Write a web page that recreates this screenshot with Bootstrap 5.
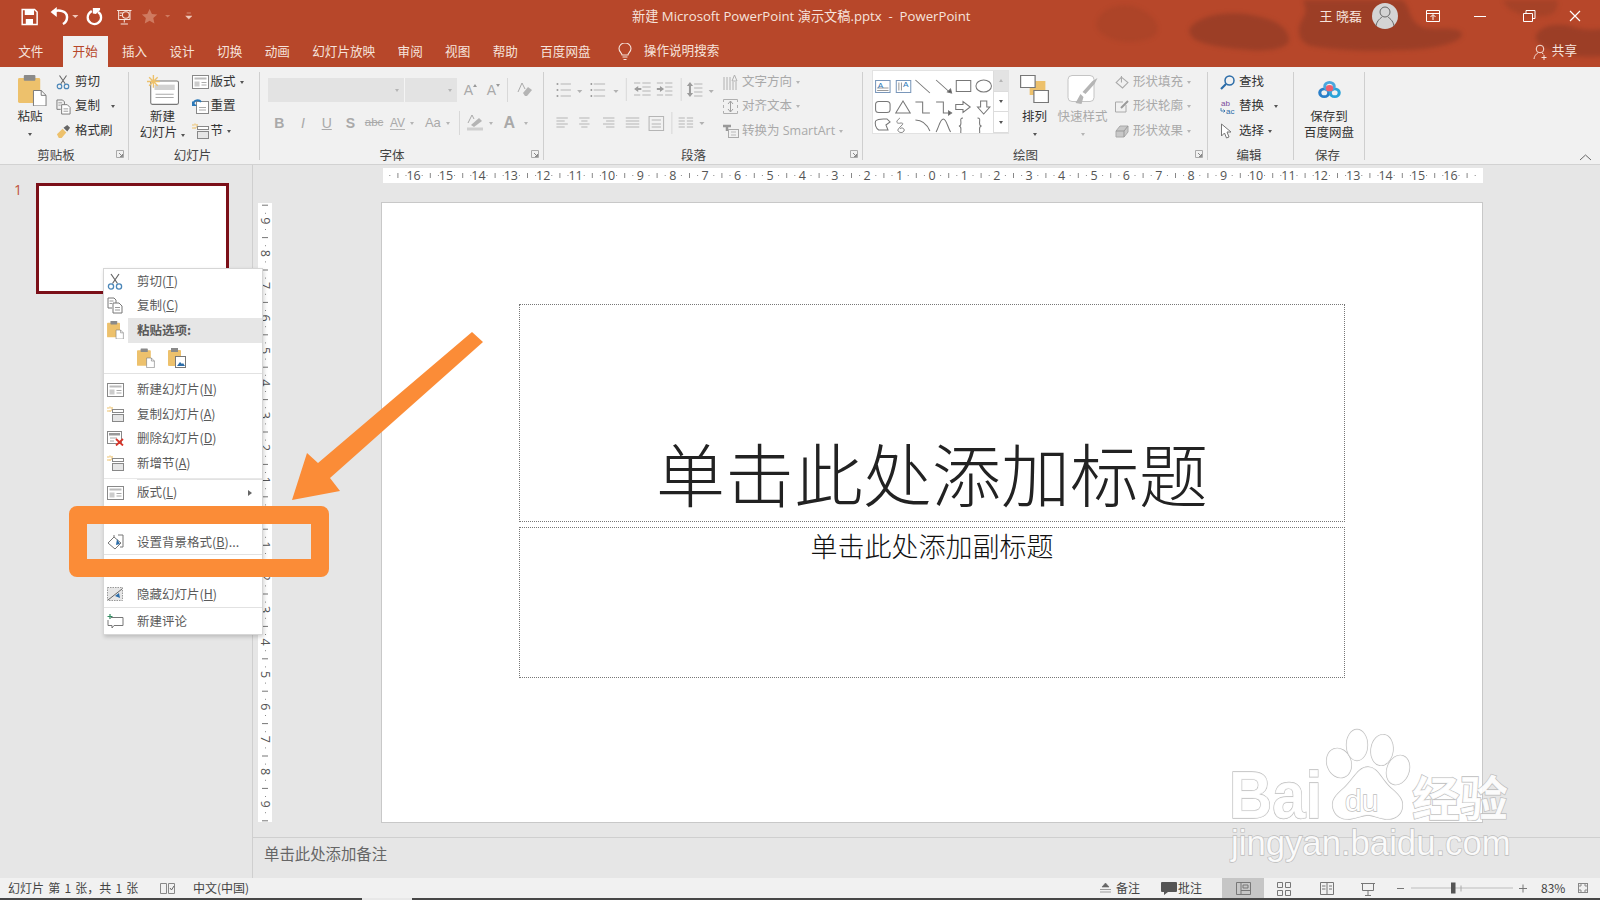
<!DOCTYPE html>
<html lang="zh-CN">
<head>
<meta charset="UTF-8" />
<title>PowerPoint</title>
<link href="https://cdn.jsdelivr.net/npm/bootstrap@5.3.2/dist/css/bootstrap.min.css" rel="stylesheet" />
<script src="https://cdn.jsdelivr.net/npm/bootstrap@5.3.2/dist/js/bootstrap.bundle.min.js" defer></script>
<style>
  html, body { height: 100%; overflow: hidden; }
  body { width: 1600px; height: 900px; position: relative; background: #e6e6e6; font-family: "Open Sans", "Noto Sans CJK SC", sans-serif; font-size: 12.5px; color: #444; }
  svg { display: block; flex: none; }

  /* title bar + tabs */
  .app-head { height: 67px; background: #b7472a; color: #f6e3dc; position: relative; overflow: hidden; }
  .head-tex { position: absolute; left: 1080px; top: 0; filter: blur(2px); }
  .title-row { height: 34px; position: relative; }
  .qat-box { width: 632px; }
  .doc-title { font-size: 13.2px; white-space: nowrap; }
  .user-name { font-size: 13px; margin-right: 10px; }
  .tab-row { height: 33px; position: relative; padding-top: 2px; padding-left: 7px; font-size: 12.6px; }
  .rtab { padding: 0 11.200px; line-height: 31px; color: #f6e3dc; white-space: nowrap; }
  .rtab.on { background: #f1f1f1; color: #b7472a; padding: 0 10px; margin-left: 8px; margin-right: 3px; }
  .tell-me { margin-left: 16px; gap: 12px; }
  .share-box { margin-left: auto; margin-right: 23px; gap: 4px; }

  /* ribbon */
  .ribbon { height: 98px; background: #f1f1f1; border-bottom: 1px solid #d2d2d2; position: relative; }
  .rgroup { height: 97px; position: relative; flex: none; }
  .rgroup::after { content: ""; position: absolute; right: 0; top: 5px; bottom: 4px; width: 1px; background: #cfcfcf; }
  .g1 { width: 129px; } .g2 { width: 131px; } .g3 { width: 284px; } .g4 { width: 319px; }
  .g5 { width: 345px; } .g6 { width: 86px; } .g7 { width: 71px; }
  .rbody { height: 81px; padding-top: 3px; }
  .rlabel { text-align: center; line-height: 16px; color: #444; padding-right: 4px; }
  .g1 .rlabel { padding-right: 17px; }
  .g3 .rlabel, .g4 .rlabel, .g5 .rlabel { padding-right: 20px; }
  .launch { position: absolute; right: 5px; bottom: 6px; }
  .rbig { display: flex; flex-direction: column; align-items: center; line-height: 16px; flex: none; color: #333; }
  .rbig .ico { height: 39px; display: flex; align-items: flex-start; justify-content: center; padding-top: 5px; }
  .rrow { height: 24.500px; display: flex; align-items: center; white-space: nowrap; color: #333; }
  .rrow .ico { width: 19px; flex: none; }
  .dis .rrow, .rbig.dis { color: #a9a9a9; }
  .dd { display: inline-block; width: 0; height: 0; border-left: 2.500px solid transparent; border-right: 2.500px solid transparent; border-top: 3px solid #555; margin-left: 4px; flex: none; }
  .dis .dd, .dd.off { border-top-color: #b5b5b5; }
  .dd.point-up { transform: rotate(180deg); }
  .dd-over { box-shadow: 0 -3px 0 -1.500px #555; }
  .pastebtn { width: 50px; margin-left: 5px; }
  .pastebtn .ico { padding-left: 5px; }
  .smallcol { margin-left: 1px; }
  .newbtn { width: 58px; margin-left: 4.500px; }
  .arrbtn { width: 40px; margin-left: 5.500px; }
  .qsbtn { width: 50px; margin-left: 3px; }
  .savebtn { width: 70px; }
  .savebtn .ico { padding-top: 10px; }
  .fontbox { padding-left: 8px; padding-top: 11px; }
  .fline { height: 24px; display: flex; align-items: center; }
  .fline + .fline { margin-top: 9px; margin-left: -.5px; }
  .combo { height: 24px; background: #e3e3e3; display: flex; align-items: center; justify-content: flex-end; padding-right: 5px; }
  .combo-a { width: 137px; border-right: 1px solid #f4f4f4; }
  .combo-b { width: 52px; }
  .ft { display: flex; align-items: center; justify-content: center; color: #a9a9a9; height: 24px; flex: none; font-family: "Liberation Sans", "Noto Sans CJK SC", sans-serif; }
  .ft-cell { width: 23px; font-size: 14px; position: relative; }
  .ft-cell .grow-tri { position: absolute; right: 3px; top: 6px; width: 0; height: 0; border-left: 2px solid transparent; border-right: 2px solid transparent; border-bottom: 3px solid #999; }
  .ft-cell .grow-tri.down { transform: rotate(180deg); }
  .ft-tool { width: 23.700px; font-size: 14px; }
  .ft-abc { font-size: 11.500px; text-decoration: line-through; }
  .ft-av { width: 39px; justify-content: flex-start; padding-left: 4px; font-size: 12px; }
  .av-txt { border-bottom: 1px solid #b5b5b5; line-height: 12px; }
  .ft-av .dd { margin-left: 5px; }
  .ft-aa { width: 34px; justify-content: flex-start; font-size: 13px; }
  .ft-aa .dd { margin-left: 5.500px; }
  .ft-big { font-size: 16px; font-weight: 700; margin-left: 10px; }
  .vsep { width: 1px; height: 24px; background: #d8d8d8; flex: none; }
  .sep-a { margin: 0 9px 0 4px; }
  .sep-b { margin-right: 7px; }
  .hl-dd { margin-left: 6.500px; }
  .a-dd { margin-left: 9px; }
  .para-col { margin-left: 3px; }
  .para-col .ico { width: 19px; }
  .gallery { margin-left: 9px; height: 64px; width: 137px; background: #fff; border: 1px solid #e2e2e2; }
  .gal-scroll { width: 15px; }
  .gal-cell { flex: 1; display: flex; align-items: center; justify-content: center; border-left: 1px solid #dcdcdc; border-bottom: 1px solid #dcdcdc; }
  .gal-cell.off { background: #e3e3e3; }
  .shape-col { margin-left: 7.500px; }
  .shape-col .ico { width: 18px; }
  .edit-col { padding-left: 12px; }
  .rep-dd { margin-left: 10px; }
  .copy-dd { margin-left: 11px; }
  .collapse-ico { position: absolute; right: 8px; bottom: 3px; }

  /* work area */
  .work { height: 713px; }
  .thumbs { width: 253px; flex: none; border-right: 1px solid #cfcfcf; padding: 18px 0 0 14px; color: #c0533a; font-size: 14px; }
  .thumb-no { width: 22px; line-height: 14px; }
  .thumb { width: 193px; height: 111px; background: #fff; border: 3px solid #7b0f18; }
  .editor { min-width: 0; }
  .h-ruler-row { height: 38px; padding: 3px 0 0 130px; }
  .canvas-row { height: 620px; padding-left: 5px; }
  .v-ruler-box { width: 14px; margin-right: 110px; height: 619px; }
  .v-ruler-box svg { overflow: visible; }
  .slide-page { width: 1100px; height: 619px; background: #fff; box-shadow: 0 0 0 1px #c8c8c8; padding-top: 101px; color: #222; font-family: "Noto Sans CJK SC", sans-serif; }
  .ph-title, .ph-sub { width: 826px; border: 1px dotted #777; text-align: center; }
  .ph-title { height: 218px; display: flex; align-items: flex-end; justify-content: center; font-size: 69px; font-weight: 300; line-height: 84px; padding-bottom: 7px; }
  .ph-sub { height: 151px; margin-top: 5px; font-size: 27px; font-weight: 300; color: #111; line-height: 36px; }
  .notes-bar { height: 41px; border-top: 1px solid #cfcfcf; padding-left: 11px; font-size: 15.400px; line-height: 31px; color: #666; font-family: "Noto Sans CJK SC", sans-serif; }

  /* status bar */
  .status { height: 22px; background: #f1f1f1; border-bottom: 2px solid #474747; font-size: 12px; line-height: 20px; color: #444; font-family: "Noto Sans CJK SC", sans-serif; position: relative; }
  .st-left { width: 1100px; padding-left: 8px; }
  .st-page { width: 152px; word-spacing: 1.500px; }
  .st-lang { margin-left: 18px; }
  .st-mid { gap: 5px; }
  .st-cmt { margin-left: 21px; gap: 1px; }
  .st-view { width: 42px; height: 20px; background: #c6c6c6; margin-left: 20px; display: flex; align-items: center; justify-content: center; }
  .zoom-pct { margin-left: -37px; width: 26px; }
  .fit-ico { margin-left: 11px; }
  .st-gap { position: absolute; left: 362px; bottom: -2px; width: 50px; height: 2px; background: #e8e8e8; }

  /* right click menu */
  .ctx-menu { position: absolute; left: 103px; top: 268px; width: 160px; height: 367px; background: #fff; border: 1px solid #d6d6d6; box-shadow: 1px 2px 4px rgba(0,0,0,.18); color: #5a5a5a; font-family: "Noto Sans CJK SC", sans-serif; }
  .mi { display: flex; align-items: center; height: 24.500px; white-space: nowrap; position: relative; }
  .mi .mi-ico { width: 33px; padding-left: 3px; flex: none; }
  .mi.head { margin-left: 24px; background: #e6e6e6; font-weight: 700; padding-left: 9px; }
  .mi.head .mi-ico { position: absolute; left: -24px; }
  .mi-paste { height: 31px; padding-left: 33px; gap: 13px; border-bottom: 1px solid #e2e2e2; }
  .mi-gap { margin-top: 4px; }
  .mi-tall { height: 28px; margin-top: 2.500px; border-top: 1px solid #e8e8e8; }
  .mi-hidden { height: 24.500px; }
  .mi-hidden.wide { height: 28px; }
  .mi-under { border-bottom: 1px solid #e2e2e2; }
  .mi-last { margin-top: 2px; }
  .mi-sub { position: absolute; right: 10px; width: 0; height: 0; border-left: 4px solid #666; border-top: 3.500px solid transparent; border-bottom: 3.500px solid transparent; }
  .sep-line::before { content: ""; position: absolute; left: 33px; right: 0; top: 0; border-top: 1px solid #e2e2e2; }

  /* annotation + watermark on top of the shot */
  .mark-box { position: absolute; left: 69px; top: 506px; width: 260px; height: 71px; border: 18px solid #fb8c37; border-radius: 8px; }
  .mark-arrow { position: absolute; left: 280px; top: 325px; }
  .watermark { position: absolute; left: 1220px; top: 725px; font-family: "Liberation Sans", "Noto Sans CJK SC", sans-serif; }
  .watermark * { paint-order: stroke; }
</style>
</head>
<body>

<svg class="d-none" xmlns="http://www.w3.org/2000/svg">
  <symbol id="i-paste" viewBox="0 0 30 32">
    <rect x="0" y="3" width="23" height="26" rx="1.500" fill="#edc16c"/>
    <rect x="6" y="0" width="12" height="6" rx="1" fill="#8a8a8a"/>
    <path d="M16 16h8l5 5v11H16z" fill="#fff" stroke="#777"/>
    <path d="M24 16v5h5" fill="none" stroke="#777"/>
  </symbol>
  <symbol id="i-cut" viewBox="0 0 16 17">
    <path d="M5.500 10.500 12 1M10.500 10.500 4 1" stroke="#666" fill="none" stroke-width="1.200"/>
    <circle cx="4" cy="13.500" r="2.600" fill="none" stroke="#4a86b8" stroke-width="1.300"/>
    <circle cx="12" cy="13.500" r="2.600" fill="none" stroke="#4a86b8" stroke-width="1.300"/>
  </symbol>
  <symbol id="i-copy" viewBox="0 0 16 17">
    <path d="M1 1h6l2 2v3M1 1v10h4" fill="none" stroke="#777"/>
    <path d="M6 6h6l3 3v7H6z" fill="#fff" stroke="#777"/>
    <path d="M2.500 4h4M2.500 6.500h2.500M8 10.500h5M8 13h5" stroke="#999"/>
  </symbol>
  <symbol id="i-brush" viewBox="0 0 16 16">
    <path d="M1 11 7 5l4 4-5 6H3z" fill="#edc16c"/>
    <path d="M8 4l4-3 3 3-3 4z" fill="#666"/>
  </symbol>
  <symbol id="i-newslide" viewBox="0 0 30 28">
    <rect x="3.500" y="5.500" width="26" height="22" rx="1.500" fill="#fff" stroke="#777"/>
    <rect x="7" y="9" width="19" height="5" fill="#d2d2d2"/>
    <path d="M8 18h17M8 21h17" stroke="#aaa"/>
    <path d="M6 0v12M0 6h12M2 2l8 8M10 2l-8 8" stroke="#edc16c" stroke-width="1.300"/>
  </symbol>
  <symbol id="i-layout" viewBox="0 0 17 14">
    <rect x=".5" y=".5" width="16" height="13" fill="#fff" stroke="#888"/>
    <rect x="2.500" y="2.500" width="12" height="2" fill="#bbb"/>
    <rect x="2.500" y="6.500" width="5" height="5" fill="#ccc"/>
    <path d="M9.500 7.500h5M9.500 10h5" stroke="#aaa"/>
  </symbol>
  <symbol id="i-reset" viewBox="0 0 17 15">
    <rect x="4.500" y="2.500" width="12" height="12" fill="#fff" stroke="#888"/>
    <path d="M7 8.500h7M7 11h7" stroke="#aaa"/>
    <path d="M1 5c1-4 6-5 8-2" fill="none" stroke="#2b78b8" stroke-width="2"/>
    <path d="M0 2v5h5z" fill="#2b78b8"/>
  </symbol>
  <symbol id="i-section" viewBox="0 0 17 16">
    <path d="M0 2h2M0 5h2M3 .5v2M3 4v2M5 1v4" stroke="#edc16c" stroke-width="1.200"/>
    <rect x="5.500" y="3.500" width="11" height="3" fill="#fff" stroke="#888"/>
    <rect x="5.500" y="8.500" width="11" height="7" fill="#e6e6e6" stroke="#888"/>
  </symbol>
  <symbol id="i-launch" viewBox="0 0 8 8">
    <path d="M.5 7.500v-7h7v7z" fill="none" stroke="#aaa"/>
    <path d="M3 3l3.500 3.500M6.500 4v2.500H4" fill="none" stroke="#888"/>
  </symbol>
</svg>

<header class="app-head">
  <svg class="head-tex" width="537" height="67" viewBox="1080 0 520 67" preserveAspectRatio="none">
    <g fill="#8a3a25" opacity=".6">
      <path d="M1098 18c8-14 30-16 42-8 12 6 20 18 12 26-14 8-38 8-50-2-6-4-8-10-4-16z" opacity=".35"/>
      <path d="M1188 26c14-14 46-16 70-8 16 4 26 14 24 24-2 6-20 10-38 8-22-2-40-4-52-10-6-4-8-10-4-14z"/>
      <path d="M1296 0h96c10 8 4 22 22 28 12 2 34-2 36 6 0 8-26 16-62 16-26 2-62 0-84-4-14-4-14-18-8-28 4-6 2-12 0-18z"/>
      <path d="M1522 34c6-10 24-12 40-6 14 4 30 0 38-2v30c-20 0-38 2-50-2-16-2-32-10-28-20z"/>
      <path d="M1490 0h52c2 8-2 16-14 16-14 2-36-4-38-16z" opacity=".6"/>
    </g>
  </svg>
  <div class="title-row d-flex align-items-center">
    <div class="qat-box">
      <svg width="196" height="34" viewBox="0 0 190 34" preserveAspectRatio="none">
        <path d="M21.500 9.500h12l2.500 2.500v12.500H21.500z" fill="none" stroke="#fff" stroke-width="1.400"/>
        <path d="M24 10h9v5h-9zM25 19h7v5h-7z" fill="#fff"/>
        <path d="M51 12c6-3 14-1 14 5 0 4-2 6-4 7" fill="none" stroke="#fff" stroke-width="2.400"/>
        <path d="M49 12l6-5v10z" fill="#fff"/>
        <path d="M70 15h6l-3 3z" fill="#f0c9bb"/>
        <path d="M89 11c-3 2-4 4-4 6.500a6.500 6.500 0 1 0 10-5.500" fill="none" stroke="#fff" stroke-width="2.200"/>
        <path d="M90 8h7v2l-4 4-3-.500z" fill="#fff"/>
        <path d="M113.500 10.500h14M115 10.500v9h11v-9M120.500 19.500v3M117 24h7" fill="none" stroke="#f6e3dc"/>
        <circle cx="122" cy="15" r="3.300" fill="none" stroke="#f6e3dc"/>
        <path d="M116 13h3M116 15.500h2" stroke="#f6e3dc"/>
        <path d="M145 9l2.300 5 5.200.600-3.900 3.500 1.100 5.300-4.700-2.700-4.700 2.700 1.100-5.300-3.900-3.500 5.200-.600z" fill="#cf7a60"/>
        <path d="M160 15h5l-2.500 2.500z" fill="#cf7a60"/>
        <path d="M181 13h4M180 16h6l-3 3z" fill="#f0c9bb" stroke="#f0c9bb" stroke-width=".5"/>
      </svg>
    </div>
    <div class="doc-title">新建 Microsoft PowerPoint 演示文稿.pptx&nbsp; -&nbsp; PowerPoint</div>
    <div class="ms-auto d-flex align-items-center">
      <span class="user-name">王 晓磊</span>
      <svg width="228" height="34" viewBox="1372 0 228 34">
        <circle cx="1385" cy="16" r="13" fill="#d4d4d4"/>
        <circle cx="1385" cy="12" r="5" fill="none" stroke="#666"/>
        <path d="M1376 26c1-6 5-8 6-9M1394 26c-1-6-5-8-6-9" fill="none" stroke="#666"/>
        <path d="M1426.500 10.500h13v11h-13zM1426.500 13.500h13" fill="none" stroke="#fff"/>
        <path d="M1433 20v-5M1430.500 17l2.500-2.500 2.500 2.500" fill="none" stroke="#fff"/>
        <path d="M1474 16.500h12" stroke="#fff"/>
        <path d="M1523.500 13.500h9v8h-9zM1526 13v-2.500h9v8h-2" fill="none" stroke="#fff"/>
        <path d="M1570 11l10 10M1580 11l-10 10" stroke="#fff" stroke-width="1.200"/>
      </svg>
    </div>
  </div>
  <nav class="tab-row d-flex">
    <span class="rtab">文件</span>
    <span class="rtab on">开始</span>
    <span class="rtab">插入</span>
    <span class="rtab">设计</span>
    <span class="rtab">切换</span>
    <span class="rtab">动画</span>
    <span class="rtab">幻灯片放映</span>
    <span class="rtab">审阅</span>
    <span class="rtab">视图</span>
    <span class="rtab">帮助</span>
    <span class="rtab">百度网盘</span>
    <span class="tell-me d-flex align-items-center">
      <svg width="14" height="18" viewBox="0 0 14 18"><path d="M4 12c0-2-3-3-3-6.500a6 5.500 0 0 1 12 0C13 9 10 10 10 12zM4.500 14h5M5.500 16.500h3" fill="none" stroke="#f6e3dc" stroke-width="1.100"/></svg>
      <span>操作说明搜索</span>
    </span>
    <span class="share-box d-flex align-items-center">
      <svg width="15" height="16" viewBox="0 0 14 16"><circle cx="6.500" cy="5" r="3.800" fill="none" stroke="#f6e3dc"/><path d="M.5 15c.5-4 3-5.500 4-6M8.500 9l1.500 1M10.500 11v5M8 13.500h5" fill="none" stroke="#f6e3dc"/></svg>
      <span>共享</span>
    </span>
  </nav>
</header>

<section class="ribbon d-flex">
  <!-- 剪贴板 -->
  <div class="rgroup g1">
    <div class="rbody d-flex">
      <div class="rbig pastebtn">
        <div class="ico"><svg width="29" height="31"><use href="#i-paste"/></svg></div>
        <span>粘贴</span><span class="dd m-0 mt-2"></span>
      </div>
      <div class="smallcol">
        <div class="rrow"><span class="ico"><svg width="14" height="16"><use href="#i-cut"/></svg></span>剪切</div>
        <div class="rrow"><span class="ico"><svg width="15" height="16"><use href="#i-copy"/></svg></span>复制<span class="dd copy-dd"></span></div>
        <div class="rrow"><span class="ico"><svg width="15" height="15"><use href="#i-brush"/></svg></span>格式刷</div>
      </div>
    </div>
    <div class="rlabel">剪贴板</div>
    <svg class="launch" width="8" height="8"><use href="#i-launch"/></svg>
  </div>

  <!-- 幻灯片 -->
  <div class="rgroup g2">
    <div class="rbody d-flex">
      <div class="rbig newbtn">
        <div class="ico"><svg width="32" height="30"><use href="#i-newslide"/></svg></div>
        <span>新建</span><span>幻灯片<span class="dd"></span></span>
      </div>
      <div>
        <div class="rrow"><span class="ico"><svg width="17" height="14"><use href="#i-layout"/></svg></span>版式<span class="dd"></span></div>
        <div class="rrow"><span class="ico"><svg width="17" height="15"><use href="#i-reset"/></svg></span>重置</div>
        <div class="rrow"><span class="ico"><svg width="17" height="16"><use href="#i-section"/></svg></span>节<span class="dd"></span></div>
      </div>
    </div>
    <div class="rlabel">幻灯片</div>
  </div>

  <!-- 字体 -->
  <div class="rgroup g3">
    <div class="rbody fontbox">
      <div class="fline">
        <div class="combo combo-a"><span class="dd off"></span></div>
        <div class="combo combo-b"><span class="dd off"></span></div>
        <span class="ft ft-cell">A<span class="grow-tri"></span></span>
        <span class="ft ft-cell">A<span class="grow-tri down"></span></span>
        <span class="vsep sep-a"></span>
        <svg width="16" height="16" viewBox="0 0 16 16"><path d="M1 10 5 1l3 6" fill="none" stroke="#aaa"/><path d="M6 11l5-6 4 3-5 6H8z" fill="#b4b4b4"/></svg>
      </div>
      <div class="fline">
        <span class="ft ft-tool fw-bold">B</span>
        <span class="ft ft-tool fst-italic">I</span>
        <span class="ft ft-tool text-decoration-underline">U</span>
        <span class="ft ft-tool fw-bold">S</span>
        <span class="ft ft-tool ft-abc">abc</span>
        <span class="ft ft-av"><span class="av-txt">AV</span><span class="dd off"></span></span>
        <span class="ft ft-aa">Aa<span class="dd off"></span></span>
        <span class="vsep sep-b"></span>
        <svg width="16" height="18" viewBox="0 0 16 18"><path d="M1 9l4-8 2 4" fill="none" stroke="#aaa"/><path d="M4 11l8-7 3 3-8 6z" fill="#b4b4b4"/><path d="M0 15h16" stroke="#cfcfcf" stroke-width="3"/></svg>
        <span class="dd off hl-dd"></span>
        <span class="ft ft-big">A</span>
        <span class="dd off a-dd"></span>
      </div>
    </div>
    <div class="rlabel">字体</div>
    <svg class="launch" width="8" height="8"><use href="#i-launch"/></svg>
  </div>

  <!-- 段落 -->
  <div class="rgroup g4">
    <div class="rbody d-flex">
      <svg width="176" height="72" viewBox="544 70 170 72" preserveAspectRatio="none">
        <g fill="none" stroke="#b5b5b5">
          <path d="M560 84h10M560 90h10M560 96h10"/>
          <path d="M592 84h11M592 90h11M592 96h11"/>
          <path d="M639 83h8M639 87h8M639 91h8M639 95h8M631 83h6M631 95h6"/>
          <path d="M661 83h7M661 87h7M661 91h7M661 95h7M653 83h6M653 95h6"/>
          <path d="M689 84h8M689 88h8M689 92h8M689 96h8"/>
          <path d="M556 118h11M556 121h8M556 124h11M556 127h8"/>
          <path d="M578 118h10M580 121h6M578 124h10M580 127h6"/>
          <path d="M601 118h11M604 121h8M601 124h11M604 127h8"/>
          <path d="M623 118h13M623 121h13M623 124h13M623 127h13"/>
          <path d="M645.500 116.500h14v14h-14zM648 124h9M648 127h9M648 120h9"/>
          <path d="M674 118h6M674 121h6M674 124h6M674 127h6M682 118h6M682 121h6M682 124h6M682 127h6"/>
          <path d="M623.500 78v23M676.500 78v23M667.500 112v22" stroke="#d8d8d8"/>
        </g>
        <g fill="#9c9c9c">
          <circle cx="557" cy="84" r="1"/><circle cx="557" cy="90" r="1"/><circle cx="557" cy="96" r="1"/>
          <rect x="589" y="83" width="1.500" height="2"/><rect x="589" y="89" width="1.500" height="2"/><rect x="589" y="95" width="1.500" height="2"/>
          <path d="M631 89l4-3v2h3v2h-3v2z"/>
          <path d="M660 89l-4-3v2h-3v2h3v2z"/>
          <path d="M685 82l3 4h-2v7h2l-3 4-3-4h2v-7h-2z"/>
          <path d="M576 90h5l-2.500 3zM611 90h5l-2.500 3zM703 90h5l-2.500 3zM694 122h5l-2.500 3z" opacity=".75"/>
        </g>
      </svg>
      <div class="para-col dis">
        <div class="rrow"><span class="ico"><svg width="15" height="17" viewBox="0 0 15 17"><path d="M1 3v13M4 3v13M7 3v13M10 8v8M13 8v8M11.500 1l-2.500 6h5z" fill="none" stroke="#b0b0b0"/></svg></span>文字方向<span class="dd"></span></div>
        <div class="rrow"><span class="ico"><svg width="15" height="15" viewBox="0 0 15 15"><path d="M.5 3V.5H14.500V3M.5 12v2.500H14.500V12M.5 6v3M14.500 6v3" fill="none" stroke="#b0b0b0"/><path d="M7.500 2v11M5 5l2.500-3L10 5M5 10l2.500 3 2.500-3" fill="none" stroke="#a0a0a0"/></svg></span>对齐文本<span class="dd"></span></div>
        <div class="rrow"><span class="ico"><svg width="16" height="14" viewBox="0 0 16 14"><path d="M0 2h8M4 2v5" stroke="#999" stroke-width="2.500"/><rect x="5.500" y="5.500" width="10" height="8" fill="#f1f1f1" stroke="#aaa"/><path d="M8 8h5M8 11h5" stroke="#bbb"/></svg></span>转换为 SmartArt<span class="dd"></span></div>
      </div>
    </div>
    <div class="rlabel">段落</div>
    <svg class="launch" width="8" height="8"><use href="#i-launch"/></svg>
  </div>

  <!-- 绘图 -->
  <div class="rgroup g5">
    <div class="rbody d-flex">
      <div class="gallery d-flex">
        <svg width="120" height="62" viewBox="862 70 116 62" preserveAspectRatio="none">
          <g fill="none" stroke="#777">
            <rect x="864.500" y="79.500" width="14" height="12" stroke="#7a97ba"/>
            <path d="M866 87h11M866 89.500h11" stroke="#999"/>
            <rect x="884.500" y="79.500" width="14" height="12" stroke="#7a97ba"/>
            <path d="M887 81.500v8M889.500 81.500v8" stroke="#999"/>
            <path d="M903 79l14 13M923 79l14 13"/>
            <path d="M938 92l-4-1 3-3z" fill="#555"/>
            <rect x="942.500" y="79.500" width="14" height="11"/>
            <ellipse cx="969" cy="85" rx="7.500" ry="6"/>
            <rect x="864.500" y="100.500" width="14" height="11" rx="3"/>
            <path d="M891 100l7 12h-14zM903 101h7v11h7M923 101h7v11h6"/>
            <path d="M938 112l-3-2v4z" fill="#555"/>
            <path d="M942 103.500h7v-3l7 5.500-7 5.500v-3h-7zM966 100h6v6h3l-6 7-6-7h3z"/>
            <path d="M864.500 120c3-3 8-2 11-2l3 3-4 3 2 5h-9c-3-2-4-6-3-9z"/>
            <path d="M888 117c-5 4-3 6 1 5 5 0-2 4-3 7 0 2 4 4 6 1 1-3-3-4-4-2" stroke-width=".9"/>
            <path d="M903 119c6 0 11 4 14 11M923 131c3-6 4-13 7-13 3 0 4 8 7 13"/>
            <path d="M949 117c-3 0-2 2-2 5 0 2-1 3-2 3 1 0 2 1 2 3 0 3-1 5 2 5"/>
            <path d="M963 117c3 0 2 2 2 5 0 2 1 3 2 3-1 0-2 1-2 3 0 3 1 5-2 5"/>
          </g>
          <text x="866.500" y="87" font-size="8" fill="#2b78b8" font-family="Liberation Sans">A</text>
          <text x="891" y="86" font-size="8" fill="#2b78b8" font-family="Liberation Sans">A</text>
        </svg>
        <div class="gal-scroll d-flex flex-column">
          <div class="gal-cell off"><span class="dd off m-0 point-up"></span></div>
          <div class="gal-cell"><span class="dd m-0"></span></div>
          <div class="gal-cell"><span class="dd m-0 dd-over"></span></div>
        </div>
      </div>
      <div class="rbig arrbtn">
        <div class="ico"><svg width="29" height="30" viewBox="0 0 24 30" preserveAspectRatio="none"><rect x="8" y="6" width="13" height="14" fill="#edc16c"/><rect x=".5" y=".5" width="12" height="12" fill="#fff" stroke="#777"/><rect x="11.500" y="15.500" width="12" height="12" fill="#fff" stroke="#777"/></svg></div>
        <span>排列</span><span class="dd m-0 mt-2"></span>
      </div>
      <div class="rbig qsbtn dis">
        <div class="ico"><svg width="32" height="30" viewBox="0 0 31 30"><rect x=".5" y=".5" width="26" height="26" rx="4" fill="#fff" stroke="#c4c4c4"/><path d="M8 28l5-9 3 3-2 7zM15 17l10-11 5-3-3 6-9 10z" fill="#b5b5b5"/></svg></div>
        <span>快速样式</span><span class="dd off m-0 mt-2"></span>
      </div>
      <div class="shape-col dis">
        <div class="rrow"><span class="ico"><svg width="14" height="14" viewBox="0 0 13 13"><path d="M1 7l5-5 6 5-5 5z" fill="none" stroke="#aaa"/><path d="M6 7V1" stroke="#aaa"/></svg></span>形状填充<span class="dd"></span></div>
        <div class="rrow"><span class="ico"><svg width="14" height="13" viewBox="0 0 14 13"><path d="M11 5v7H.5V2H8" fill="none" stroke="#aaa"/><path d="M6 8l7-7" stroke="#999" stroke-width="2"/></svg></span>形状轮廓<span class="dd"></span></div>
        <div class="rrow"><span class="ico"><svg width="14" height="13" viewBox="0 0 14 13"><path d="M5 1h8v6l-4 5H1V6z" fill="#c8c8c8" stroke="#aaa"/><path d="M1 6h8l4-5M9 6v6" fill="none" stroke="#999"/></svg></span>形状效果<span class="dd"></span></div>
      </div>
    </div>
    <div class="rlabel">绘图</div>
    <svg class="launch" width="8" height="8"><use href="#i-launch"/></svg>
  </div>

  <!-- 编辑 -->
  <div class="rgroup g6">
    <div class="rbody edit-col">
      <div class="rrow"><span class="ico"><svg width="15" height="15" viewBox="0 0 15 15"><circle cx="9.500" cy="5.500" r="4.500" fill="none" stroke="#2b6ca8" stroke-width="1.500"/><path d="M6 9l-5 5" stroke="#2b6ca8" stroke-width="2.200"/></svg></span>查找</div>
      <div class="rrow"><span class="ico"><svg width="16" height="16" viewBox="0 0 16 16"><text x="1" y="7" font-size="8" fill="#7b4a9b" font-family="Liberation Sans">ab</text><text x="6" y="15" font-size="8" fill="#2b6ca8" font-family="Liberation Sans">ac</text><path d="M1 9v3h4M3.500 10.500 5 12l-1.500 1.500" fill="none" stroke="#2b6ca8" stroke-width=".8"/></svg></span>替换<span class="dd rep-dd"></span></div>
      <div class="rrow"><span class="ico"><svg width="12" height="17" viewBox="0 0 12 17"><path d="M1.500 1v12l3-3 2 5 2.500-1-2-5h4z" fill="#fff" stroke="#777"/></svg></span>选择<span class="dd"></span></div>
    </div>
    <div class="rlabel">编辑</div>
  </div>

  <!-- 保存 -->
  <div class="rgroup g7">
    <div class="rbody">
      <div class="rbig savebtn">
        <div class="ico"><svg width="23" height="20" viewBox="0 0 22 22" preserveAspectRatio="none"><circle cx="6" cy="14" r="4.300" fill="none" stroke="#2a7fc9" stroke-width="3"/><circle cx="16" cy="14" r="4.300" fill="none" stroke="#2aa3d8" stroke-width="3"/><circle cx="11" cy="7" r="4.500" fill="none" stroke="#4aa7de" stroke-width="3"/><circle cx="11" cy="9" r="3.500" fill="#ef5f6e"/></svg></div>
        <span>保存到</span><span>百度网盘</span>
      </div>
    </div>
    <div class="rlabel">保存</div>
  </div>

  <svg class="collapse-ico" width="13" height="7" viewBox="0 0 13 7"><path d="M1 6l5.500-5L12 6" fill="none" stroke="#666"/></svg>
</section>

<main class="work d-flex">
  <aside class="thumbs d-flex">
    <span class="thumb-no">1</span>
    <div class="thumb"></div>
  </aside>
  <div class="editor flex-grow-1 d-flex flex-column">
    <div class="h-ruler-row"><svg id="hRuler" width="1100" height="15"></svg></div>
    <div class="canvas-row d-flex">
      <div class="v-ruler-box"><svg id="vRuler" width="14" height="619"></svg></div>
      <div class="slide-page d-flex flex-column align-items-center">
        <div class="ph-title"><span>单击此处添加标题</span></div>
        <div class="ph-sub">单击此处添加副标题</div>
      </div>
    </div>
    <div class="notes-bar mt-auto">单击此处添加备注</div>
  </div>
</main>

<footer class="status d-flex align-items-center">
  <div class="st-left d-flex align-items-center">
    <span class="st-page">幻灯片 第 1 张，共 1 张</span>
    <svg width="15" height="13" viewBox="0 0 15 13"><path d="M.5 1.500h6v10h-6zM8.500 1.500h6v10h-6z" fill="none" stroke="#888"/><path d="M10 6l1.500 2L14 4" fill="none" stroke="#666"/></svg>
    <span class="st-lang">中文(中国)</span>
  </div>
  <div class="st-mid d-flex align-items-center">
    <svg width="11" height="10" viewBox="0 0 11 10"><path d="M5.500 0 9 4H2zM0 6.500h11M0 9h11" fill="#666" stroke="#666" stroke-width=".6"/></svg>
    <span>备注</span>
  </div>
  <div class="st-mid st-cmt d-flex align-items-center">
    <svg width="16" height="13" viewBox="0 0 16 13"><path d="M1 0h14a1 1 0 0 1 1 1v8a1 1 0 0 1-1 1H7l-4 3v-3H1a1 1 0 0 1-1-1V1a1 1 0 0 1 1-1z" fill="#555"/></svg>
    <span>批注</span>
  </div>
  <div class="st-view">
    <svg width="15" height="13" viewBox="0 0 15 13"><path d="M.5.500h14v12H.5zM5 .5v12M5 8.500h9.500M7 3h5v3H7z" fill="none" stroke="#777"/></svg>
  </div>
  <div class="d-flex align-items-center">
    <svg width="314" height="20" viewBox="1266 878 314 20">
      <g fill="none" stroke="#777">
        <path d="M1279.500 882.500h5v5h-5zM1287.500 882.500h5v5h-5zM1279.500 890.500h5v5h-5zM1287.500 890.500h5v5h-5z"/>
        <path d="M1322.500 882.500h13v12h-13zM1329 882.500v12M1324 886h3.500M1324 889h3.500M1331 886h3M1331 889h3"/>
        <path d="M1363 883.500h14M1364.500 883.500v7h11v-7M1370 890.500v5M1367 895.500h6"/>
      </g>
      <path d="M1399 888.500h7M1521 888.500h8M1525 884.500v8" stroke="#777"/>
      <path d="M1413 888h102" stroke="#bdbdbd"/>
      <path d="M1463 885.500v6" stroke="#aaa"/>
      <rect x="1453" y="882.500" width="4.500" height="11" fill="#555"/>
    </svg>
    <span class="zoom-pct">83%</span>
    <svg class="fit-ico" width="10" height="10" viewBox="0 0 10 10"><rect x=".5" y=".5" width="9" height="9" fill="none" stroke="#888"/><path d="M2 2h2M2 2v2M8 2H6M8 2v2M2 8h2M2 8V6M8 8H6M8 8V6" stroke="#888"/></svg>
  </div>
  <span class="st-gap"></span>
</footer>

<!-- 右键菜单 -->
<div class="ctx-menu">
  <div class="mi"><span class="mi-ico"><svg width="16" height="17"><use href="#i-cut"/></svg></span>剪切(<u>T</u>)</div>
  <div class="mi"><span class="mi-ico"><svg width="16" height="17"><use href="#i-copy"/></svg></span>复制(<u>C</u>)</div>
  <div class="mi head"><span class="mi-ico"><svg width="17" height="18"><use href="#i-paste"/></svg></span>粘贴选项:</div>
  <div class="d-flex align-items-center mi-paste">
    <svg width="18" height="20"><use href="#i-paste"/></svg>
    <svg width="18" height="20" viewBox="0 0 18 20"><rect x="0" y="2" width="13" height="16" rx="1" fill="#edc16c"/><rect x="3" y="0" width="7" height="4" fill="#8a8a8a"/><rect x="7.500" y="8.500" width="10" height="11" fill="#fff" stroke="#777"/><path d="M9 18l3-4 2 2 1-1 2 3z" fill="#2b6ca8"/></svg>
  </div>
  <div class="mi mi-gap"><span class="mi-ico"><svg width="17" height="14"><use href="#i-layout"/></svg></span>新建幻灯片(<u>N</u>)</div>
  <div class="mi"><span class="mi-ico"><svg width="17" height="16"><use href="#i-section"/></svg></span>复制幻灯片(<u>A</u>)</div>
  <div class="mi"><span class="mi-ico"><svg width="17" height="15" viewBox="0 0 17 15"><rect x=".5" y=".5" width="14" height="12" fill="#fff" stroke="#888"/><rect x="2" y="2" width="11" height="2.500" fill="#999"/><path d="M3 7h7M3 10h4" stroke="#aaa"/><path d="M9 8l7 6.500M16 8l-7 6.500" stroke="#d8352a" stroke-width="1.800"/></svg></span>删除幻灯片(<u>D</u>)</div>
  <div class="mi"><span class="mi-ico"><svg width="17" height="16"><use href="#i-section"/></svg></span>新增节(<u>A</u>)</div>
  <div class="mi mi-tall sep-line"><span class="mi-ico"><svg width="17" height="14"><use href="#i-layout"/></svg></span>版式(<u>L</u>)<span class="mi-sub"></span></div>
  <div class="mi mi-hidden"></div>
  <div class="mi mi-under"><span class="mi-ico"><svg width="17" height="17" viewBox="0 0 17 17"><path d="M1 9l6-6 7 6-6 6z" fill="#fff" stroke="#777"/><path d="M7 3V1M11 1h5v12h-3" fill="none" stroke="#777"/><path d="M10 5l3 5-4 1z" fill="#2b6ca8"/></svg></span>设置背景格式(<u>B</u>)...</div>
  <div class="mi mi-hidden wide"></div>
  <div class="mi mi-under"><span class="mi-ico"><svg width="17" height="15" viewBox="0 0 17 15"><rect x=".5" y=".5" width="15" height="13" fill="#e6e6e6" stroke="#999" stroke-dasharray="1.500 1"/><path d="M1 13 15 2" stroke="#666"/><path d="M8 9l4-3 1 5z" fill="#2b6ca8"/></svg></span>隐藏幻灯片(<u>H</u>)</div>
  <div class="mi mi-last"><span class="mi-ico"><svg width="17" height="15" viewBox="0 0 17 15"><path d="M4 3.500h12v8H7l-2 2.500v-2.500H1V6" fill="none" stroke="#777"/><path d="M3 0v5M.5 2.500h5" stroke="#2f8a5f" stroke-width="1.200"/></svg></span>新建评论</div>
</div>

<!-- 标注 -->
<div class="mark-box"></div>
<svg class="mark-arrow" width="210" height="185" viewBox="280 325 210 185">
  <polygon points="292,500 340,491 330,478 483,342 472,332 318,463 307,453" fill="#fb8c37"/>
</svg>

<!-- 水印 -->
<svg class="watermark" width="300" height="145" viewBox="1220 725 300 145">
  <g fill="#fff" fill-opacity=".88" stroke="#bdbdbd" stroke-width="1.300">
    <text x="1229" y="818" font-size="67" font-weight="700" textLength="93" lengthAdjust="spacingAndGlyphs">Bai</text>
    <ellipse cx="1339" cy="763" rx="12" ry="15" transform="rotate(-20 1339 763)"/>
    <ellipse cx="1357" cy="745" rx="10.500" ry="15.500"/>
    <ellipse cx="1382" cy="750" rx="11" ry="15.500" transform="rotate(8 1382 750)"/>
    <ellipse cx="1398" cy="770" rx="11" ry="15" transform="rotate(20 1398 770)"/>
    <path d="M1368 767c10 0 14 14 24 22 8 7 12 12 10 20-2 8-10 11-17 10-8-1-12-4-17-4s-10 3-18 4c-8 1-15-3-17-11-2-8 3-13 11-20 9-8 14-21 24-21z"/>
    <text x="1345" y="811" font-size="30" fill-opacity="1">du</text>
    <text x="1412" y="816" font-size="48" font-weight="700" font-family="'Noto Sans CJK SC', sans-serif">经验</text>
    <text x="1231" y="855" font-size="34.700">jingyan.baidu.com</text>
  </g>
</svg>

<script>
  // 标尺刻度
  const NS = "http://www.w3.org/2000/svg";
  const UNIT = 32.4;

  function addEl(parent, tag, attrs, text) {
    const el = document.createElementNS(NS, tag);
    for (const k in attrs) el.setAttribute(k, attrs[k]);
    if (text !== undefined) el.textContent = text;
    parent.appendChild(el);
  }

  const h = document.getElementById("hRuler");
  addEl(h, "rect", { width: 1100, height: 15, fill: "#fff" });
  for (let i = -17; i <= 17; i += 0.25) {
    const x = 549 + i * UNIT;
    if (x < 2 || x > 1098) continue;
    if (Number.isInteger(i) && Math.abs(i) <= 16) {
      addEl(h, "text", { x, y: 12, "font-size": 12.5, "text-anchor": "middle", fill: "#555", "font-family": "Open Sans" }, Math.abs(i));
    } else if (i * 2 === Math.round(i * 2)) {
      addEl(h, "rect", { x, y: 5, width: 1, height: 5, fill: "#888" });
    } else {
      addEl(h, "rect", { x, y: 7, width: 1, height: 1, fill: "#888" });
    }
  }

  const v = document.getElementById("vRuler");
  addEl(v, "rect", { width: 14, height: 619, fill: "#fff" });
  for (let i = -9.5; i <= 9.5; i += 0.25) {
    const y = 309.5 + i * UNIT;
    if (Number.isInteger(i)) {
      addEl(v, "text", { x: 0, y: 0, "font-size": 12.5, "text-anchor": "middle", fill: "#555", "font-family": "Open Sans", transform: `translate(3 ${y}) rotate(90)` }, Math.abs(i));
    } else if (i * 2 === Math.round(i * 2)) {
      addEl(v, "rect", { x: 4, y, width: 6, height: 1, fill: "#777" });
    } else {
      addEl(v, "rect", { x: 7, y, width: 1, height: 1, fill: "#888" });
    }
  }
</script>
</body>
</html>
